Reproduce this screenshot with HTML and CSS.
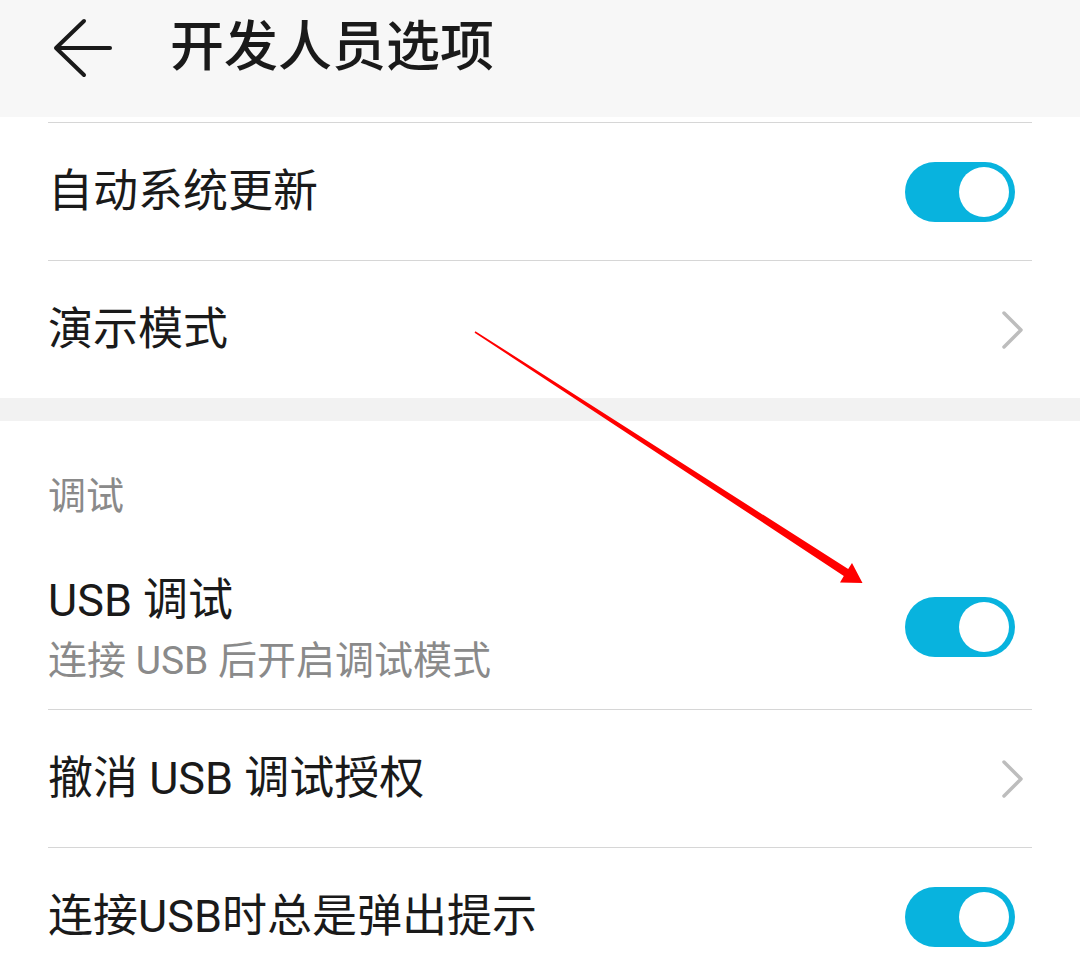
FILE: index.html
```html
<!DOCTYPE html>
<html lang="zh-CN">
<head>
<meta charset="utf-8">
<title>开发人员选项</title>
<link rel="stylesheet" href="styles.css">
</head>
<body>
<div class="page">
  <header class="appbar">
    <div class="appbar-row">
      <svg class="back" width="60" height="60" viewBox="0 0 60 60" aria-hidden="true">
        <polyline points="32,3 4,30 32,57" fill="none" stroke="#1a1a1a" stroke-width="4" stroke-linecap="round" stroke-linejoin="round"/>
        <line x1="5" y1="30" x2="58" y2="30" stroke="#1a1a1a" stroke-width="4" stroke-linecap="round"/>
      </svg>
      <h1 class="title">开发人员选项</h1>
    </div>
  </header>

  <section class="group first">
    <div class="row">
      <span class="label">自动系统更新</span>
      <span class="toggle"><span class="knob"></span></span>
    </div>
    <div class="row">
      <span class="label">演示模式</span>
      <svg class="chev" width="28" height="40" viewBox="0 0 28 40" aria-hidden="true">
        <polyline points="5,3 22,20 5,37" fill="none" stroke="#bdbdbd" stroke-width="3.5" stroke-linecap="round" stroke-linejoin="round"/>
      </svg>
    </div>
  </section>

  <div class="band"></div>

  <section class="group">
    <div class="section-head">调试</div>
    <div class="row tall noline">
      <div class="text">
        <div class="label">USB 调试</div>
        <div class="sub">连接 USB 后开启调试模式</div>
      </div>
      <span class="toggle"><span class="knob"></span></span>
    </div>
    <div class="row">
      <span class="label">撤消 USB 调试授权</span>
      <svg class="chev" width="28" height="40" viewBox="0 0 28 40" aria-hidden="true">
        <polyline points="5,3 22,20 5,37" fill="none" stroke="#bdbdbd" stroke-width="3.5" stroke-linecap="round" stroke-linejoin="round"/>
      </svg>
    </div>
    <div class="row">
      <span class="label">连接USB时总是弹出提示</span>
      <span class="toggle"><span class="knob"></span></span>
    </div>
  </section>

  <svg class="annot" width="1080" height="962" viewBox="0 0 1080 962" aria-hidden="true">
    <polygon points="475.4,331.3 848.2,569.1 852,563 862.5,583 840,582.5 843.8,575.9 474.6,332.7" fill="#ff0000"/>
  </svg>
</div>
</body>
</html>
```

FILE: styles.css
```css
* { box-sizing: border-box; }
html, body { margin: 0; padding: 0; }
body {
  width: 1080px;
  height: 962px;
  overflow: hidden;
  background: #ffffff;
  font-family: Roboto, "Noto Sans CJK SC", "Noto Sans", sans-serif;
  color: #1a1a1a;
}
.page { position: relative; width: 1080px; height: 962px; overflow: hidden; }

.appbar {
  height: 117px;
  background: #f7f7f7;
}
.appbar-row {
  height: 96px;
  display: flex;
  align-items: center;
  padding-left: 52px;
}
.back { display: block; flex: none; }
.title {
  margin: 0 0 0 58px;
  font-size: 54px;
  font-weight: 500;
  line-height: 60px;
  color: #1a1a1a;
  letter-spacing: 0;
}

.group.first { padding-top: 5px; }

.row {
  margin: 0 48px;
  height: 138px;
  display: flex;
  align-items: center;
  justify-content: space-between;
  border-top: 1.5px solid #d6d6d6;
}
.row.noline { border-top: none; }
.row.tall { height: 165px; }

.label {
  font-size: 45px;
  line-height: 54px;
  color: #1a1a1a;
}
.text { padding-top: 6px; }
.sub {
  margin-top: 8px;
  font-size: 39px;
  line-height: 50px;
  color: #8a8a8a;
}

.band { height: 23px; background: #f2f2f2; }

.section-head {
  padding: 49px 48px 22px;
  font-size: 38px;
  line-height: 52px;
  color: #8a8a8a;
}

.toggle {
  flex: none;
  width: 110px;
  height: 60px;
  margin-right: 17px;
  border-radius: 30px;
  background: #08b3de;
  display: flex;
  align-items: center;
  justify-content: flex-end;
  padding-right: 6px;
}
.knob {
  width: 50px;
  height: 50px;
  border-radius: 50%;
  background: #ffffff;
}

.chev { display: block; flex: none; margin-right: 5px; }

.annot { position: absolute; left: 0; top: 0; pointer-events: none; }
```
